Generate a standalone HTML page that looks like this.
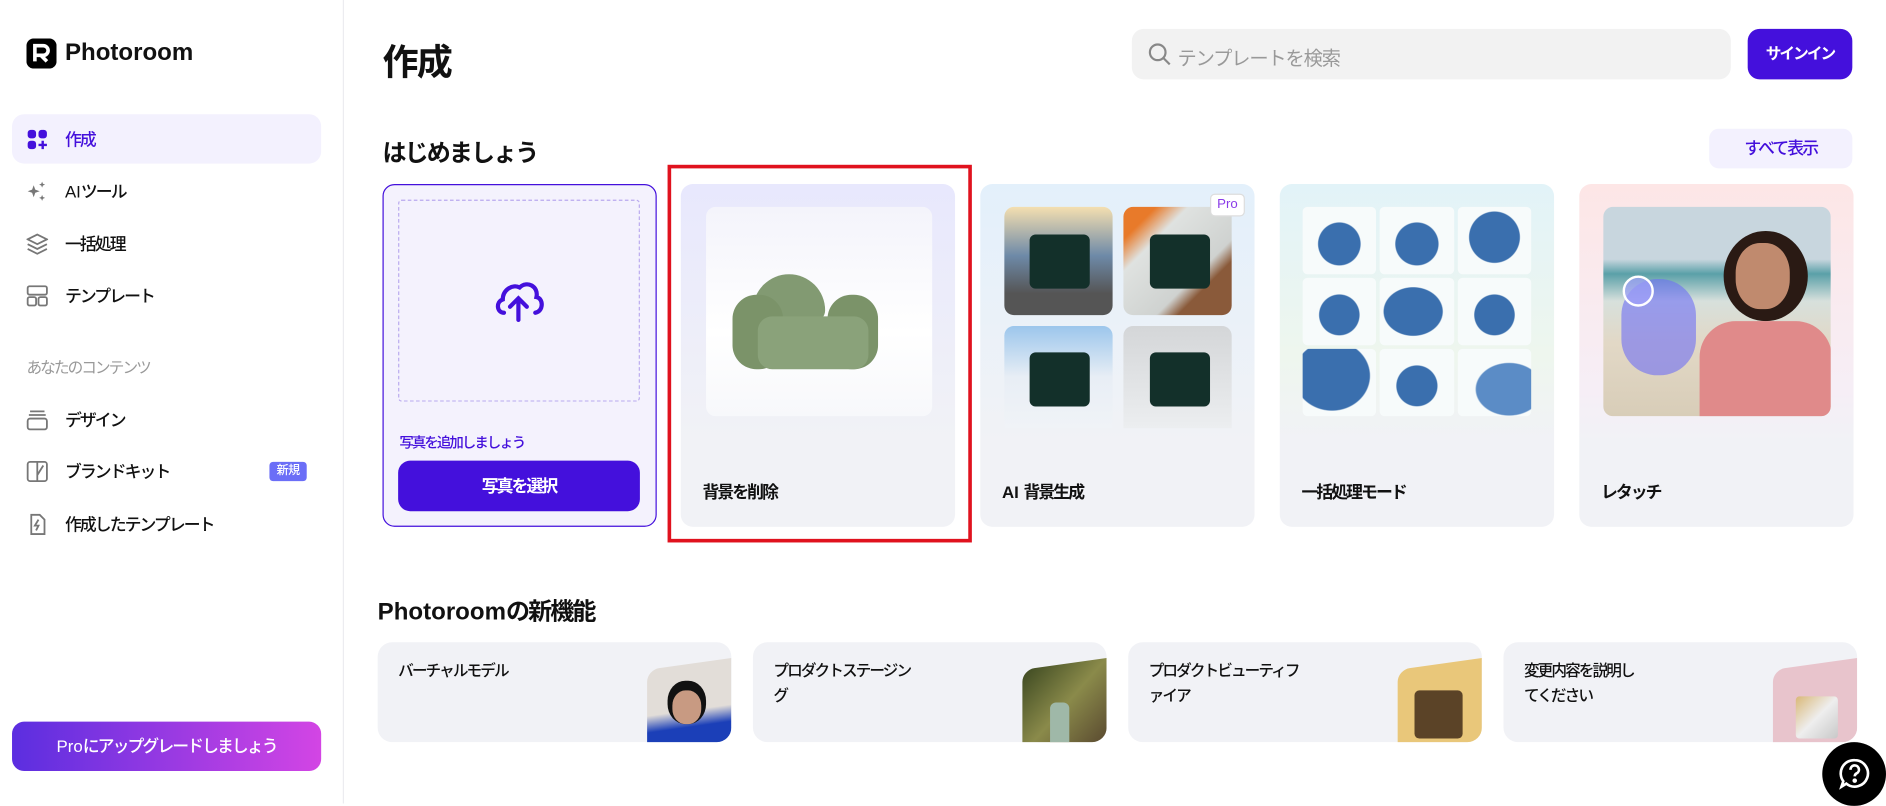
<!DOCTYPE html>
<html><head><meta charset="utf-8"><style>
*{box-sizing:border-box;margin:0;padding:0}
body{width:1886px;height:803px;overflow:hidden;background:#fff;font-family:"Liberation Sans","Noto Sans CJK JP",sans-serif;color:#111;letter-spacing:-0.1em}
.n{letter-spacing:0}
#w{width:1568px;height:668px;position:relative;transform:scale(1.20281);transform-origin:0 0}
.a{position:absolute}
.nav{position:absolute;left:10px;width:257px;height:41px;border-radius:10px;display:flex;align-items:center;font-size:14px;font-weight:500}
.nav svg{position:absolute;left:12px}
.nav span{position:absolute;left:44px}
.card{position:absolute;top:153px;width:228px;height:285px;border-radius:10px;background:#f1f2f6;overflow:hidden}
.card .lb{position:absolute;left:18px;top:246px;font-size:14px;font-weight:600}
.bc{position:absolute;top:534px;width:294px;height:83px;border-radius:12px;background:#f1f2f6;overflow:hidden}
.bc .t{position:absolute;left:17px;top:13px;font-size:13px;line-height:21px;font-weight:500}
.bc .im{position:absolute;right:0;top:18px;width:70px;height:70px;border-radius:10px 0 0 0;transform:skewY(-8deg)}
</style></head><body><div id="w">
<div class="a" style="left:285px;top:0;width:1px;height:668px;background:#ececf0"></div>
<svg class="a" style="left:22px;top:32px" width="25" height="25" viewBox="0 0 25 25"><rect width="25" height="25" rx="6" fill="#000"/><path d="M7 19V6h7a4 4 0 0 1 0 8H7M12 14l5 5" fill="none" stroke="#fff" stroke-width="3"/></svg>
<div class="a n" style="left:54px;top:33px;font-size:20px;font-weight:700">Photoroom</div>

<div class="nav" style="top:95px;background:#f3f1fe;color:#4410dc"><svg width="18" height="18" viewBox="0 0 18 18" fill="#4410dc"><rect x="1" y="1" width="7" height="7" rx="2.5"/><rect x="10" y="1" width="7" height="7" rx="2.5"/><rect x="1" y="10" width="7" height="7" rx="2.5"/><path d="M13.5 10v7M10 13.5h7" stroke="#4410dc" stroke-width="2"/></svg><span>作成</span></div>
<div class="nav" style="top:138px"><svg width="18" height="18" viewBox="0 0 18 18" fill="#777"><path d="M6 4l1.3 3.7L11 9l-3.7 1.3L6 14l-1.3-3.7L1 9l3.7-1.3z"/><path d="M13 1l.7 1.8 1.8.7-1.8.7L13 6l-.7-1.8-1.8-.7 1.8-.7zM13 12l.7 1.8 1.8.7-1.8.7L13 17l-.7-1.8-1.8-.7 1.8-.7z"/></svg><span><span class="n" style="position:static">AI</span>ツール</span></div>
<div class="nav" style="top:182px"><svg width="18" height="18" viewBox="0 0 18 18" fill="none" stroke="#777" stroke-width="1.5"><path d="M9 1l8 4-8 4-8-4z"/><path d="M1 9l8 4 8-4M1 13l8 4 8-4"/></svg><span>一括処理</span></div>
<div class="nav" style="top:225px"><svg width="18" height="18" viewBox="0 0 18 18" fill="none" stroke="#777" stroke-width="1.5"><rect x="1" y="1" width="16" height="7" rx="1.5"/><rect x="1" y="10" width="7" height="7" rx="1.5"/><rect x="10" y="10" width="7" height="7" rx="1.5"/></svg><span>テンプレート</span></div>
<div class="a" style="left:22px;top:295px;font-size:13px;color:#999">あなたのコンテンツ</div>
<div class="nav" style="top:328px"><svg width="18" height="18" viewBox="0 0 18 18" fill="none" stroke="#777" stroke-width="1.5"><path d="M3 2h12M2 5h14"/><rect x="1" y="8" width="16" height="9" rx="2"/></svg><span>デザイン</span></div>
<div class="nav" style="top:371px"><svg width="18" height="18" viewBox="0 0 18 18" fill="none" stroke="#777" stroke-width="1.5"><rect x="1" y="1" width="16" height="16" rx="2"/><path d="M9 1v16M9 12l5-8"/></svg><span>ブランドキット</span><div class="a" style="left:214px;top:13px;width:31px;height:16px;background:#6b6ef7;color:#fff;border-radius:3px;font-size:10px;text-align:center;line-height:16px;letter-spacing:-0.05em">新規</div></div>
<div class="nav" style="top:415px"><svg width="18" height="18" viewBox="0 0 18 18" fill="none" stroke="#777" stroke-width="1.5"><path d="M4 1h7l4 4v12H4z"/><path d="M10 5l-3 5h3l-2 4"/></svg><span>作成したテンプレート</span></div>
<div class="a" style="left:10px;top:600px;width:257px;height:41px;border-radius:10px;background:linear-gradient(90deg,#5b2ee0,#d345e4);color:#fff;font-size:14px;text-align:center;line-height:41px;font-weight:500"><span class="n">Pro</span>にアップグレードしましょう</div>

<div class="a" style="left:318px;top:27px;font-size:30px;font-weight:700;letter-spacing:-0.05em">作成</div>
<div class="a" style="left:941px;top:24px;width:498px;height:42px;border-radius:10px;background:#f2f2f2"></div>
<svg class="a" style="left:954px;top:35px" width="20" height="20" viewBox="0 0 20 20" fill="none" stroke="#888" stroke-width="1.8"><circle cx="8.5" cy="8.5" r="6.5"/><path d="M13.5 13.5l5 5"/></svg>
<div class="a" style="left:979px;top:35px;font-size:16px;color:#999;letter-spacing:-0.06em">テンプレートを検索</div>
<div class="a" style="left:1453px;top:24px;width:87px;height:42px;border-radius:10px;background:#4410dc;color:#fff;font-size:13px;font-weight:700;text-align:center;line-height:42px">サインイン</div>

<div class="a" style="left:318px;top:111px;font-size:20px;font-weight:700">はじめましょう</div>
<div class="a" style="left:1421px;top:107px;width:119px;height:33px;border-radius:8px;background:#f3f1fe;color:#4410dc;font-size:14px;text-align:center;line-height:33px;font-weight:500">すべて表示</div>

<div class="card" style="left:318px;background:#f4f2fd;border:1px solid #4410dc">
<div class="a" style="left:12px;top:12px;width:201px;height:168px;border:1px dashed #b9a9ee;border-radius:3px"></div>
<svg class="a" style="left:90px;top:78px" width="44" height="36" viewBox="0 0 44 36" fill="none" stroke="#4410dc" stroke-width="3.5" stroke-linecap="round"><path d="M10 28C4 28 3 19 9 17c0-8 8-13 14-10 6-6 16-1 14 8 6 1 6 12-1 13"/><path d="M22 34V17M15 23l7-7 7 7"/></svg>
<div class="a" style="left:13px;top:205px;font-size:12px;color:#4410dc;font-weight:500">写真を追加しましょう</div>
<div class="a" style="left:12px;top:229px;width:201px;height:42px;border-radius:10px;background:#4410dc;color:#fff;font-size:14px;font-weight:700;text-align:center;line-height:42px">写真を選択</div>
</div>

<div class="card" style="left:566px;background:linear-gradient(#e8e8fd,#f1f2f6 75%)">
<div class="a" style="left:21px;top:19px;width:188px;height:174px;border-radius:8px;background:linear-gradient(#f4f4fb,#fff 60%,#f7f8fb)"></div>
<div class="a" style="left:60px;top:75px;width:60px;height:40px;border-radius:30px 30px 10px 10px;background:#829a72"></div>
<div class="a" style="left:43px;top:92px;width:42px;height:62px;border-radius:20px;background:#7b9369"></div>
<div class="a" style="left:122px;top:92px;width:42px;height:62px;border-radius:20px;background:#7b9369"></div>
<div class="a" style="left:64px;top:110px;width:92px;height:44px;border-radius:12px;background:#8aa27a"></div>
<div class="lb">背景を削除</div></div>

<div class="card" style="left:815px;background:linear-gradient(#e3f0fb,#f1f2f6 75%)">
<div class="a" style="left:20px;top:19px;width:90px;height:90px;border-radius:8px;background:linear-gradient(#f4dfb0,#6e8aa8 45%,#555 80%)"></div>
<div class="a" style="left:119px;top:19px;width:90px;height:90px;border-radius:8px;background:linear-gradient(135deg,#e87a2a 15%,#dfe2e0 30%,#cfd2d0 65%,#8a5a3a 75%)"></div>
<div class="a" style="left:20px;top:118px;width:90px;height:85px;border-radius:8px 8px 0 0;background:linear-gradient(#9cc6ec,#e8eef5 50%,#f0f3f7)"></div>
<div class="a" style="left:119px;top:118px;width:90px;height:85px;border-radius:8px 8px 0 0;background:linear-gradient(#d4d6d8,#eceef0)"></div>
<div class="a" style="left:41px;top:42px;width:50px;height:45px;border-radius:5px;background:#13302a"></div>
<div class="a" style="left:141px;top:42px;width:50px;height:45px;border-radius:5px;background:#13302a"></div>
<div class="a" style="left:41px;top:140px;width:50px;height:45px;border-radius:5px;background:#13302a"></div>
<div class="a" style="left:141px;top:140px;width:50px;height:45px;border-radius:5px;background:#13302a"></div>
<div class="a n" style="left:191px;top:8px;width:29px;height:19px;border-radius:4px;background:#fff;border:1px solid #ddd;color:#8a3ce8;font-size:11px;text-align:center;line-height:17px">Pro</div>
<div class="lb"><span class="n">AI </span>背景生成</div></div>

<div class="card" style="left:1064px;background:linear-gradient(#e2f3f8,#eef6ee 50%,#f1f2f6 75%)">
<div class="a" style="left:19px;top:19px;width:190px;height:174px;display:grid;grid-template-columns:repeat(3,1fr);gap:3px">
<div style="background:radial-gradient(ellipse at 50% 55%,#3a6fae 40%,#f7fbfb 42%);border-radius:4px"></div><div style="background:radial-gradient(ellipse at 50% 55%,#3a6fae 40%,#f7fbfb 42%);border-radius:4px"></div><div style="background:radial-gradient(ellipse at 50% 45%,#3a6fae 48%,#f7fbfb 50%);border-radius:4px"></div>
<div style="background:radial-gradient(ellipse at 50% 55%,#3a6fae 38%,#f7fbfb 40%);border-radius:4px"></div><div style="background:radial-gradient(ellipse at 45% 50%,#3a6fae 50%,#f7fbfb 52%);border-radius:4px"></div><div style="background:radial-gradient(ellipse at 50% 55%,#3a6fae 38%,#f7fbfb 40%);border-radius:4px"></div>
<div style="background:radial-gradient(ellipse at 40% 40%,#3a6fae 60%,#f7fbfb 62%);border-radius:4px"></div><div style="background:radial-gradient(ellipse at 50% 55%,#3a6fae 38%,#f7fbfb 40%);border-radius:4px"></div><div style="background:radial-gradient(ellipse at 70% 60%,#5b8cc6 45%,#f7fbfb 47%);border-radius:4px"></div>
</div>
<div class="lb">一括処理モード</div></div>

<div class="card" style="left:1313px;background:linear-gradient(#fde6e6,#f6eef6 60%,#f1f2f6 75%)">
<div class="a" style="left:20px;top:19px;width:189px;height:174px;border-radius:8px;overflow:hidden;background:linear-gradient(#c8d6de 25%,#5aa0a8 32%,#d7e0dc 45%,#e2d8c6 65%,#d8cdb8)">
<div class="a" style="left:100px;top:20px;width:70px;height:75px;border-radius:50%;background:#2a1a14"></div>
<div class="a" style="left:110px;top:30px;width:45px;height:55px;border-radius:45%;background:#c08a6e"></div>
<div class="a" style="left:80px;top:95px;width:110px;height:90px;border-radius:30px 30px 0 0;background:#e08a8a"></div>
<div class="a" style="left:15px;top:60px;width:62px;height:80px;border-radius:30px;background:rgba(110,110,245,.6)"></div>
<div class="a" style="left:16px;top:57px;width:26px;height:26px;border-radius:50%;border:2px solid #fff;background:rgba(160,160,250,.7)"></div>
</div>
<div class="lb">レタッチ</div></div>

<div class="a" style="left:555px;top:137px;width:253px;height:314px;border:3px solid #e0121e"></div>

<div class="a" style="left:314px;top:492px;font-size:20px;font-weight:700"><span class="n">Photoroom</span>の新機能</div>
<div class="bc" style="left:314px"><div class="t">バーチャルモデル</div><div class="im" style="background:linear-gradient(#e2ddd8 55%,#1b3fb8 75%);"></div><div class="a" style="left:245px;top:40px;width:24px;height:28px;border-radius:45%;background:#c89a82;box-shadow:0 -4px 0 4px #111"></div></div>
<div class="bc" style="left:626px"><div class="t">プロダクトステージン<br>グ</div><div class="im" style="background:linear-gradient(135deg,#3e4a22,#8a8a4a 50%,#5a4a30)"></div><div class="a" style="left:247px;top:50px;width:16px;height:40px;border-radius:5px;background:#9fb8a8"></div></div>
<div class="bc" style="left:938px"><div class="t">プロダクトビューティフ<br>ァイア</div><div class="im" style="background:#e9c77a"></div><div class="a" style="left:238px;top:40px;width:40px;height:40px;border-radius:4px;background:#5b4327"></div></div>
<div class="bc" style="left:1250px"><div class="t">変更内容を説明し<br>てください</div><div class="im" style="background:#e8c4cc"></div><div class="a" style="left:243px;top:45px;width:35px;height:35px;border-radius:3px;background:linear-gradient(135deg,#d9b877,#eee 50%,#c8c8c8)"></div></div>

<div class="a" style="left:1515px;top:617px;width:53px;height:53px;border-radius:50%;background:#000"></div>
<svg class="a" style="left:1528px;top:629px" width="28" height="28" viewBox="0 0 28 28" fill="none" stroke="#fff" stroke-width="2.2"><path d="M14 3a11 11 0 1 1-7 19.5L3 25l1.5-4.5A11 11 0 0 1 14 3z"/><path d="M10.5 11a3.5 3.5 0 1 1 5 3c-1 .6-1.5 1.2-1.5 2.5"/><circle cx="14" cy="20" r=".8" fill="#fff"/></svg>
</div></body></html>
